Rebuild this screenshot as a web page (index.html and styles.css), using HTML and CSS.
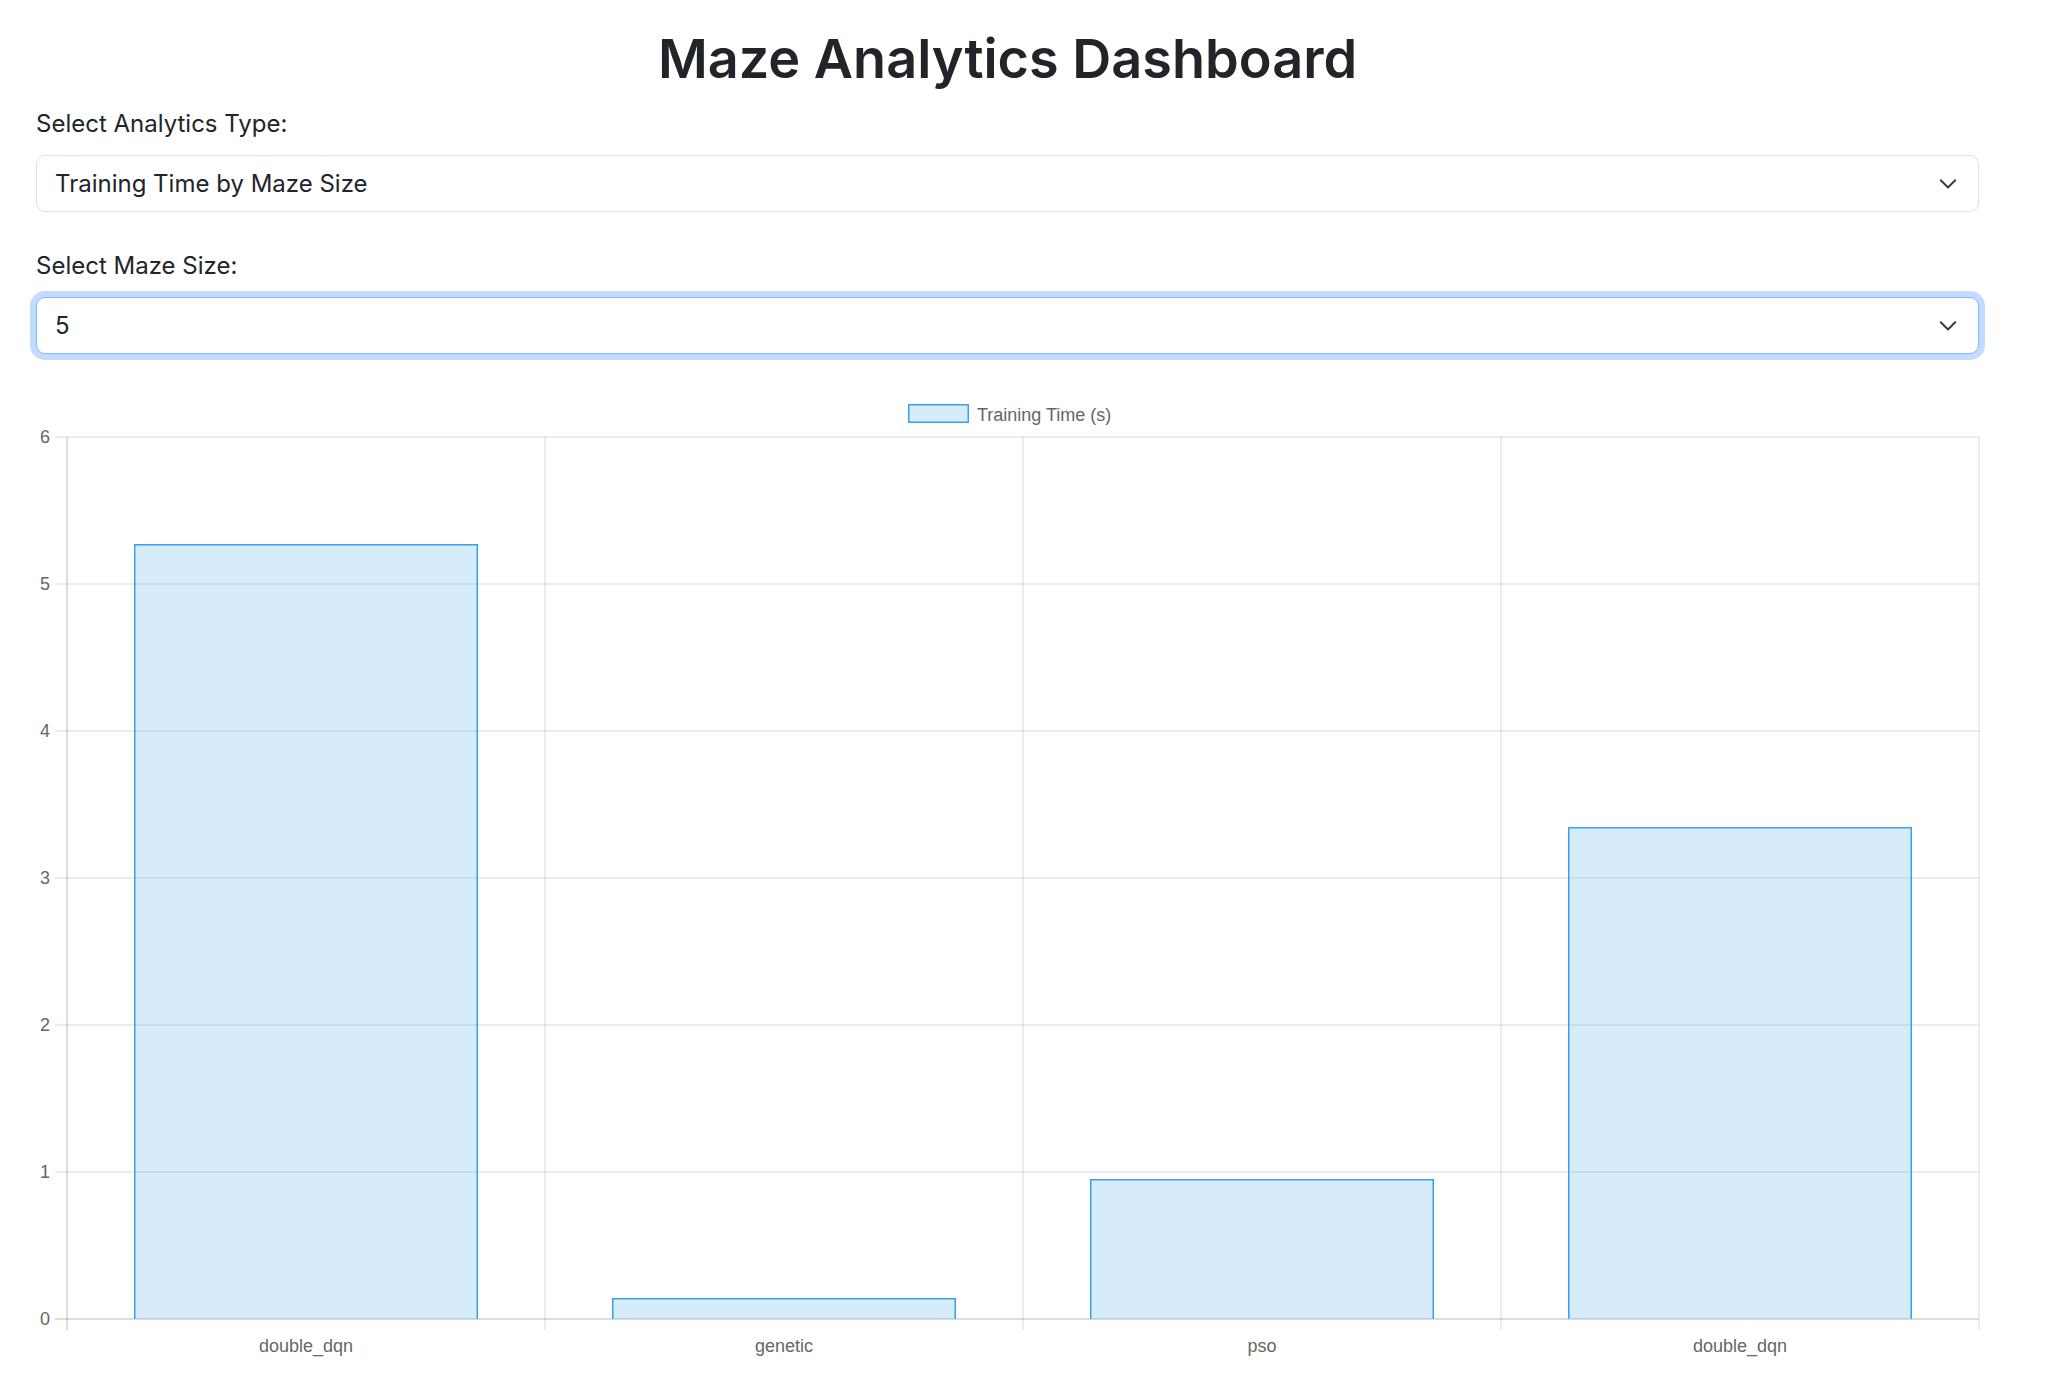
FILE: index.html
```html
<!DOCTYPE html>
<html lang="en">
<head>
<meta charset="utf-8">
<title>Maze Analytics Dashboard</title>
<link rel="stylesheet" href="styles.css">
</head>
<body>
<div class="page">
  <h1 class="title">Maze Analytics Dashboard</h1>

  <div class="field">
    <label class="field-label">Select Analytics Type:</label>
    <div class="select" role="combobox">
      <span class="select-value">Training Time by Maze Size</span>
      <svg class="chevron" viewBox="0 0 16 16" width="24" height="24"><path d="M3.2 5.5 8 10.3 12.8 5.5" fill="none" stroke="#343a40" stroke-width="1.3" stroke-linecap="round" stroke-linejoin="round"/></svg>
    </div>
  </div>

  <div class="field field-last">
    <label class="field-label">Select Maze Size:</label>
    <div class="select select-focus" role="combobox">
      <span class="select-value">5</span>
      <svg class="chevron" viewBox="0 0 16 16" width="24" height="24"><path d="M3.2 5.5 8 10.3 12.8 5.5" fill="none" stroke="#343a40" stroke-width="1.3" stroke-linecap="round" stroke-linejoin="round"/></svg>
    </div>
  </div>

  <svg class="chart" width="1944" height="1000" viewBox="0 0 1944 1000">
    <!-- legend -->
    <rect x="872.75" y="24.75" width="59.5" height="17.5" fill="rgba(54,162,235,0.2)" stroke="rgb(54,162,235)" stroke-width="1.5"/>
    <text class="chart-text" x="941" y="41">Training Time (s)</text>

    <!-- grid -->
    <g stroke="rgba(0,0,0,0.1)" stroke-width="1.5">
      <line x1="19" y1="57" x2="1943" y2="57"/>
      <line x1="19" y1="204" x2="1943" y2="204"/>
      <line x1="19" y1="351" x2="1943" y2="351"/>
      <line x1="19" y1="498" x2="1943" y2="498"/>
      <line x1="19" y1="645" x2="1943" y2="645"/>
      <line x1="19" y1="792" x2="1943" y2="792"/>
      <line x1="509" y1="57" x2="509" y2="950"/>
      <line x1="987" y1="57" x2="987" y2="950"/>
      <line x1="1465" y1="57" x2="1465" y2="950"/>
      <line x1="1943" y1="57" x2="1943" y2="950"/>
    </g>
    <g stroke="rgba(0,0,0,0.18)" stroke-width="1.5">
      <line x1="19" y1="939" x2="1943" y2="939"/>
      <line x1="31" y1="57" x2="31" y2="950"/>
    </g>

    <!-- y labels -->
    <g class="chart-text" text-anchor="end">
      <text x="14" y="63">6</text>
      <text x="14" y="210">5</text>
      <text x="14" y="357">4</text>
      <text x="14" y="504">3</text>
      <text x="14" y="651">2</text>
      <text x="14" y="798">1</text>
      <text x="14" y="945">0</text>
    </g>

    <!-- bars -->
    <g fill="rgba(54,162,235,0.2)">
      <rect x="98" y="164" width="344" height="775"/>
      <rect x="576" y="918" width="344" height="21"/>
      <rect x="1054" y="799" width="344" height="140"/>
      <rect x="1532" y="447" width="344" height="492"/>
    </g>
    <g fill="none" stroke="rgb(54,162,235)" stroke-width="1.5">
      <path d="M98.75 939 V164.75 H441.25 V939"/>
      <path d="M576.75 939 V918.75 H919.25 V939"/>
      <path d="M1054.75 939 V799.75 H1397.25 V939"/>
      <path d="M1532.75 939 V447.75 H1875.25 V939"/>
    </g>

    <!-- x labels -->
    <g class="chart-text" text-anchor="middle">
      <text x="270" y="972">double_dqn</text>
      <text x="748" y="972">genetic</text>
      <text x="1226" y="972">pso</text>
      <text x="1704" y="972">double_dqn</text>
    </g>
  </svg>
</div>
</body>
</html>
```

FILE: styles.css
```css
html, body {
  margin: 0;
  padding: 0;
  background: #fff;
}

body {
  font-family: Inter, "Noto Sans", "Liberation Sans", sans-serif;
  color: #212529;
}

.page {
  padding: 26px 73px 0 36px;
}

.title {
  margin: 0 0 15px;
  font-size: 54px;
  font-weight: 600;
  line-height: 65px;
  text-align: center;
  color: #212529;
}

.field {
  margin-bottom: 36px;
}

.field-last {
  margin-bottom: 26px;
}

.field-label {
  display: block;
  font-size: 24px;
  line-height: 36px;
  margin-bottom: 13px;
}

.select {
  box-sizing: border-box;
  height: 57px;
  display: flex;
  align-items: center;
  justify-content: space-between;
  padding: 0 18px;
  border: 1.5px solid #dee2e6;
  border-radius: 9px;
  background: #fff;
  font-size: 24px;
  line-height: 36px;
  color: #212529;
}

.select-focus {
  border-color: #86b7fe;
  box-shadow: 0 0 0 6px rgba(13, 110, 253, 0.25);
}

.chevron {
  display: block;
  flex: none;
}

.chart {
  display: block;
  overflow: visible;
}

.chart-text {
  font-family: "Liberation Sans", Arial, sans-serif;
  font-size: 18px;
  fill: #666;
}
```
